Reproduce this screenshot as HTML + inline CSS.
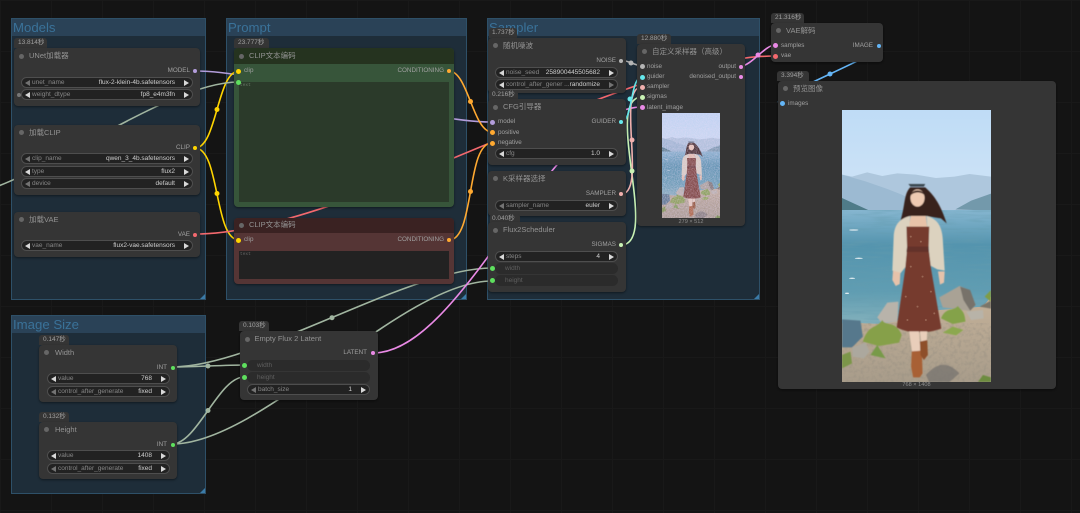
<!DOCTYPE html>
<html lang="zh"><head><meta charset="utf-8"><title>ComfyUI</title>
<style>
html,body{margin:0;padding:0;width:1080px;height:513px;overflow:hidden;background:#141414}
body{position:relative;font-family:"Liberation Sans","Noto Sans CJK SC",sans-serif;
background-image:linear-gradient(#191919 1px,transparent 1px),linear-gradient(90deg,#191919 1px,transparent 1px);background-size:51px 51px}
div,span,i,b,svg{position:absolute;box-sizing:border-box}
.g{background:#1e2d39;border:1px solid #2e5068}
.gh{left:0;top:0;right:0;height:17px;background:#2a4257}
.gt{left:1px;top:0;font-size:13.2px;line-height:17px;color:#3a7299;white-space:nowrap}
.gc{right:0;bottom:0;width:0;height:0;border-left:5px solid transparent;border-bottom:5px solid #3b7ba8}
.n{background:#353535;border-radius:4px;box-shadow:0 1px 2px rgba(0,0,0,.45)}
.b{background:#353535;border-radius:3px 3px 0 0;height:10px;color:#a0a0a0;font-size:6.5px;line-height:10px;padding-left:4px;white-space:nowrap}
.t{font-size:7.5px;line-height:10px;color:#939393;white-space:nowrap}
.d{width:5px;height:5px;border-radius:50%;background:#666}
.l{font-size:6.3px;line-height:10px;color:#a0a0a0;white-space:nowrap}
.r{text-align:right;transform:translateX(-100%)}
.p{width:4px;height:4px;margin:-2px 0 0 -2px;border-radius:50%}
.P{width:5px;height:5px;margin:-2.5px 0 0 -2.5px;border-radius:50%}
.w{height:11px;background:#222;border:1px solid #4e4e4e;border-radius:6px;color:#868686;font-size:6.5px;line-height:9px}
.w span{left:10px;top:0;white-space:nowrap}
.w b{right:17px;top:0;font-weight:normal;color:#cfcfcf;white-space:nowrap}
.w i{top:1.500px;width:0;height:0;border-top:3px solid transparent;border-bottom:3px solid transparent}
.al{left:3px;border-right:5px solid #d8d8d8}
.ar{right:3px;border-left:5px solid #d8d8d8}
.dim{opacity:.45}
.x{height:11px;background:#2b2b2b;border-radius:6px;color:#5f5f5f;font-size:6.5px;line-height:11px;padding-left:10px}
.c{font-size:5.6px;line-height:7px;color:#8f8f8f;text-align:center}
</style></head><body>

<svg width="0" height="0" style="left:0;top:0">
<defs>
<linearGradient id="sky" x1="0" y1="0" x2="0" y2="1"><stop offset="0" stop-color="#bfdcf6"/><stop offset=".6" stop-color="#dbe9f5"/><stop offset="1" stop-color="#ecf2f6"/></linearGradient>
<linearGradient id="sea" x1="0" y1="0" x2="0" y2="1"><stop offset="0" stop-color="#86b6d0"/><stop offset=".3" stop-color="#5494ae"/><stop offset=".7" stop-color="#609db2"/><stop offset="1" stop-color="#86b2bc"/></linearGradient>
<linearGradient id="gnd" x1="0" y1="0" x2="0" y2="1"><stop offset="0" stop-color="#c4b199"/><stop offset="1" stop-color="#a89c8a"/></linearGradient>
<filter id="wave" x="0" y="0" width="100%" height="100%"><feTurbulence type="fractalNoise" baseFrequency="0.012 0.13" numOctaves="2" seed="4"/><feColorMatrix values="0 0 0 0 .13  0 0 0 0 .33  0 0 0 0 .42  1.7 0 0 0 -.72"/></filter>
<filter id="gravel" x="0" y="0" width="100%" height="100%"><feTurbulence type="fractalNoise" baseFrequency="0.09" numOctaves="2" seed="9"/><feColorMatrix values="0 0 0 0 .3  0 0 0 0 .27  0 0 0 0 .22  2 0 0 0 -.85"/></filter>
<filter id="speck" x="0" y="0" width="100%" height="100%"><feTurbulence type="fractalNoise" baseFrequency="0.9" numOctaves="1" seed="3"/><feColorMatrix values="0 0 0 0 .85  0 0 0 0 .72  0 0 0 0 .95  1.6 0 0 0 -.55"/></filter>
<filter id="soft"><feGaussianBlur stdDeviation="1.800"/></filter>
<symbol id="scene" viewBox="0 0 444 816" preserveAspectRatio="none">
<rect width="444" height="816" fill="url(#sky)"/>
<path d="M0 194L30 200 75 187 120 198 165 190 220 194 280 204 335 200 380 192 444 200V310H0Z" fill="#aec7dd"/>
<path d="M0 194L70 214 130 235 178 254 240 285 300 300H0Z" fill="#9cbad2"/>
<path d="M338 298L385 272 444 251V302Z" fill="#7399ab"/>
<path d="M0 264L30 278 78 300H0Z" fill="#4f7b88"/>
<rect y="300" width="444" height="350" fill="url(#sea)"/>
<rect y="300" width="444" height="350" filter="url(#wave)" opacity=".65"/>
<g fill="#fff" opacity=".8"><ellipse cx="35" cy="360" rx="14" ry="2"/><ellipse cx="50" cy="445" rx="12" ry="2"/><ellipse cx="30" cy="505" rx="9" ry="2"/><ellipse cx="15" cy="550" rx="6" ry="2"/></g>
<path d="M0 640C50 635 90 645 130 640L290 600 420 590 444 560V816H0Z" fill="url(#gnd)"/>
<rect y="640" width="444" height="176" filter="url(#gravel)" opacity=".55"/>
<g filter="url(#soft)">
<path d="M0 628L55 632 62 680 30 712H0Z" fill="#56788c"/>
<path d="M290 562L350 528 380 540 398 585 382 603 300 592Z" fill="#a9a295"/>
<path d="M352 530L382 540 398 585 382 602 362 570Z" fill="#77726a"/>
<path d="M105 622L135 578 168 575 165 635 120 640Z" fill="#b8b3aa"/>
<path d="M30 712L70 698 82 725 65 745 32 740Z" fill="#aca89e"/>
<path d="M410 590L444 572V596Z" fill="#7a7468"/>
<path d="M370 605L420 600 422 625 385 630Z" fill="#b8b3a8"/>
<path d="M62 695C80 640 100 660 120 630 130 650 160 630 178 675L170 698 110 708Z" fill="#86a04a"/>
<path d="M295 625C310 590 330 605 345 588 360 605 365 605 368 635L330 642Z" fill="#84a24a"/>
<path d="M85 735L105 705 130 745Z" fill="#789a4a"/>
<path d="M300 668L330 650 362 660 340 676Z" fill="#8ca850"/>
<path d="M405 816L420 795 444 802V816Z" fill="#6d8c40"/>
<path d="M425 560L444 540V575Z" fill="#7f9c44"/>
<path d="M0 735L25 725 30 760 0 775Z" fill="#7c9648"/>
<path d="M250 795C290 750 320 760 350 790L320 816H260Z" fill="#6e6c6a" opacity=".65"/>
</g>
<g filter="url(#soft)">
<path d="M203 232C182 255 190 290 170 345L205 318 250 318 295 325 312 340C298 300 285 265 248 232Z" fill="#37201c"/>
<path d="M198 222H248L244 230H204Z" fill="#3b4650"/>
<path d="M205 318H250L254 352H198Z" fill="#e8c2a8"/>
<ellipse cx="225" cy="264" rx="21" ry="26" fill="#eecab2"/>
<path d="M204 256C210 236 240 236 247 256 236 244 216 244 204 256Z" fill="#37201c"/>
<path d="M203 318C170 326 156 345 154 380L150 482 174 490 194 465 198 380ZM252 318C282 326 300 345 301 400L306 482 284 478 262 466 256 380Z" fill="#dcd2bf"/>
<path d="M192 350L260 350 258 416 266 480 296 656C250 672 200 672 163 652L188 480 194 416Z" fill="#763a2e"/>
<path d="M194 410H258V426H192Z" fill="#63302a"/>
<path d="M152 482L174 488 172 522 160 528 150 510ZM286 484L306 484 304 518 292 524Z" fill="#e6c2aa"/>
<path d="M200 664H230L234 735H210ZM232 664H254L252 700H236Z" fill="#e9ceba"/>
<path d="M208 724L238 722 240 790 232 802H212L206 770Z" fill="#a86034"/>
<path d="M232 695L254 690 256 735 244 750 234 735Z" fill="#8e4f2c"/>
</g>
<g fill="#b58a74" opacity=".55"><circle cx="205" cy="380" r="3"/><circle cx="235" cy="395" r="3"/><circle cx="205" cy="470" r="3"/><circle cx="240" cy="500" r="3"/><circle cx="190" cy="560" r="3"/><circle cx="225" cy="590" r="3"/><circle cx="265" cy="545" r="3"/><circle cx="250" cy="630" r="3"/><circle cx="195" cy="630" r="3"/><circle cx="275" cy="610" r="3"/></g>
</symbol>
</defs></svg>

<!-- groups -->
<div class="g" style="left:11px;top:18px;width:195px;height:282px"><div class="gh"></div><div class="gt">Models</div><i class="gc"></i></div>
<div class="g" style="left:226px;top:18px;width:241px;height:282px"><div class="gh"></div><div class="gt">Prompt</div><i class="gc"></i></div>
<div class="g" style="left:487px;top:18px;width:273px;height:282px"><div class="gh"></div><div class="gt">Sampler</div><i class="gc"></i></div>
<div class="g" style="left:11px;top:315px;width:195px;height:179px"><div class="gh"></div><div class="gt">Image Size</div><i class="gc"></i></div>

<!-- links -->
<svg width="1080" height="513" viewBox="0 0 1080 513" style="left:0;top:0" fill="none" stroke-width="1.6">
<path d="M195 71C270 71 417 122 492 122" stroke="#b39ddb"/>
<path d="M195 148C217 148 217 71 239 71" stroke="#ffd500"/>
<path d="M195 148C220 148 214 240 239 240" stroke="#ffd500"/>
<path d="M195 234C347 234 623 56 775 56" stroke="#f4696e"/>
<path d="M449 71C468 71 473 132 492 132" stroke="#ffa931"/>
<path d="M449 240C475 240 466 143 492 143" stroke="#ffa931"/>
<path d="M172 367C256 367 408 268 492 268" stroke="#a1b5a0"/>
<path d="M172 367C190 367 226 365 244 365" stroke="#a1b5a0"/>
<path d="M172 444C197 444 219 377 244 377" stroke="#a1b5a0"/>
<path d="M172 444C262 444 402 281 492 281" stroke="#a1b5a0"/>
<path d="M-60 200C20 200 159 82 239 82" stroke="#a1b5a0"/>
<path d="M373 353C464 353 551 107 642 107" stroke="#ea8ae6"/>
<path d="M621 245C661 245 602 97 642 97" stroke="#c9f2b4"/>
<path d="M621 194C648 194 615 87 642 87" stroke="#f0b0ae"/>
<path d="M621 122C633 122 630 77 642 77" stroke="#66e8ec"/>
<path d="M621 60C626 60 637 66 642 66" stroke="#b5b5b5"/>
<path d="M741 66C751 66 765 45 775 45" stroke="#ea8ae6"/>
<path d="M878 45C906 45 754 103 782 103" stroke="#64b5f6"/>
<g stroke="none">
<circle cx="217" cy="109.500" r="2.500" fill="#ffd500"/><circle cx="217" cy="193.500" r="2.500" fill="#ffd500"/>
<circle cx="470.500" cy="101.500" r="2.500" fill="#ffa931"/><circle cx="470.500" cy="191.500" r="2.500" fill="#ffa931"/>
<circle cx="332" cy="317.700" r="2.500" fill="#a1b5a0"/><circle cx="208" cy="366" r="2.500" fill="#a1b5a0"/><circle cx="208" cy="410.500" r="2.500" fill="#a1b5a0"/>
<circle cx="632" cy="171" r="2.500" fill="#c9f2b4"/><circle cx="632" cy="140" r="2.500" fill="#f0b0ae"/><circle cx="630" cy="99" r="2.500" fill="#66e8ec"/><circle cx="631" cy="63" r="2.500" fill="#b5b5b5"/>
<circle cx="758" cy="55" r="2.500" fill="#ea8ae6"/><circle cx="830" cy="74" r="2.500" fill="#64b5f6"/>
</g></svg>

<!-- Models nodes -->
<div class="b" style="left:14px;top:38px;width:33px">13.814秒</div>
<div class="n" style="left:14px;top:48px;width:186px;height:58px"></div>
<i class="d" style="left:19px;top:54px"></i><div class="t" style="left:29px;top:51px">UNet加载器</div>
<div class="l r" style="left:190px;top:66px">MODEL</div><i class="p" style="left:195px;top:71px;background:#b39ddb"></i>
<div class="w" style="left:21px;top:77px;width:172px"><i class="al dim"></i><span>unet_name</span><b>flux-2-klein-4b.safetensors</b><i class="ar"></i></div>
<div class="w" style="left:21px;top:89px;width:172px"><i class="al"></i><span>weight_dtype</span><b>fp8_e4m3fn</b><i class="ar"></i></div>
<i class="p" style="left:19px;top:94.500px;background:#777"></i>

<div class="n" style="left:14px;top:125px;width:186px;height:70px"></div>
<i class="d" style="left:19px;top:130px"></i><div class="t" style="left:29px;top:128px">加载CLIP</div>
<div class="l r" style="left:190px;top:143px">CLIP</div><i class="p" style="left:195px;top:148px;background:#ffd500"></i>
<div class="w" style="left:21px;top:153px;width:172px"><i class="al dim"></i><span>clip_name</span><b>qwen_3_4b.safetensors</b><i class="ar"></i></div>
<div class="w" style="left:21px;top:166px;width:172px"><i class="al"></i><span>type</span><b>flux2</b><i class="ar"></i></div>
<div class="w" style="left:21px;top:178px;width:172px"><i class="al dim"></i><span>device</span><b>default</b><i class="ar"></i></div>

<div class="n" style="left:14px;top:212px;width:186px;height:45px"></div>
<i class="d" style="left:19px;top:217px"></i><div class="t" style="left:29px;top:215px">加载VAE</div>
<div class="l r" style="left:190px;top:230px">VAE</div><i class="p" style="left:195px;top:234.500px;background:#f4696e"></i>
<div class="w" style="left:21px;top:240px;width:172px"><i class="al"></i><span>vae_name</span><b>flux2-vae.safetensors</b><i class="ar"></i></div>

<!-- Prompt nodes -->
<div class="b" style="left:234px;top:38px;width:35px">23.777秒</div>
<div class="n" style="left:234px;top:48px;width:220px;height:159px;background:#37553a"></div>
<div style="left:234px;top:48px;width:220px;height:16px;background:#25331f;border-radius:4px 4px 0 0"></div>
<i class="d" style="left:239px;top:54px"></i><div class="t" style="left:249px;top:51px">CLIP文本编码</div>
<div style="left:239px;top:82px;width:210px;height:120px;background:#2b3a2a"></div>
<div style="left:240px;top:83px;font-size:4.500px;color:#6a7a68;font-family:'Liberation Mono',monospace">text</div>
<div class="l" style="left:244px;top:66px">clip</div><i class="P" style="left:238.700px;top:71px;background:#ffd500"></i>
<div class="l r" style="left:444px;top:66px">CONDITIONING</div><i class="p" style="left:449px;top:71px;background:#ffa931"></i>
<i class="P" style="left:238.700px;top:82px;background:#5ee05e"></i>

<div class="n" style="left:234px;top:218px;width:220px;height:66px;background:#553535"></div>
<div style="left:234px;top:218px;width:220px;height:15px;background:#3a2222;border-radius:4px 4px 0 0"></div>
<i class="d" style="left:239px;top:223px"></i><div class="t" style="left:249px;top:220px">CLIP文本编码</div>
<div style="left:239px;top:251px;width:210px;height:28px;background:#222"></div>
<div style="left:240px;top:252px;font-size:4.500px;color:#666;font-family:'Liberation Mono',monospace">text</div>
<div class="l" style="left:244px;top:235px">clip</div><i class="P" style="left:238.700px;top:240px;background:#ffd500"></i>
<div class="l r" style="left:444px;top:235px">CONDITIONING</div><i class="p" style="left:449px;top:240px;background:#ffa931"></i>

<!-- Sampler nodes -->
<div class="b" style="left:489px;top:28px;width:28px;padding-left:3px">1.737秒</div>
<div class="n" style="left:488px;top:38px;width:138px;height:55px"></div>
<i class="d" style="left:493px;top:43px"></i><div class="t" style="left:503px;top:41px">随机噪波</div>
<div class="l r" style="left:616px;top:56px">NOISE</div><i class="p" style="left:621px;top:60.500px;background:#b5b5b5"></i>
<div class="w" style="left:495px;top:67px;width:123px"><i class="al"></i><span>noise_seed</span><b>258900445505682</b><i class="ar"></i></div>
<div class="w" style="left:495px;top:79px;width:123px"><i class="al"></i><span>control_after_gener ...</span><b>randomize</b><i class="ar dim"></i></div>

<div class="b" style="left:489px;top:90px;width:29px;padding-left:3px">0.216秒</div>
<div class="n" style="left:488px;top:99px;width:138px;height:66px"></div>
<i class="d" style="left:493px;top:105px"></i><div class="t" style="left:503px;top:102px">CFG引导器</div>
<i class="P" style="left:492.500px;top:122px;background:#b39ddb"></i><div class="l" style="left:498px;top:117px">model</div>
<i class="P" style="left:492.500px;top:132.500px;background:#ffa931"></i><div class="l" style="left:498px;top:127.500px">positive</div>
<i class="P" style="left:492.500px;top:143px;background:#ffa931"></i><div class="l" style="left:498px;top:138px">negative</div>
<div class="l r" style="left:616px;top:117px">GUIDER</div><i class="p" style="left:621px;top:122px;background:#66e8ec"></i>
<div class="w" style="left:495px;top:148px;width:123px"><i class="al"></i><span>cfg</span><b>1.0</b><i class="ar"></i></div>

<div class="n" style="left:488px;top:171px;width:138px;height:45px"></div>
<i class="d" style="left:493px;top:176px"></i><div class="t" style="left:503px;top:174px">K采样器选择</div>
<div class="l r" style="left:616px;top:189px">SAMPLER</div><i class="p" style="left:621px;top:194px;background:#f0b0ae"></i>
<div class="w" style="left:495px;top:200px;width:123px"><i class="al dim"></i><span>sampler_name</span><b>euler</b><i class="ar"></i></div>

<div class="b" style="left:490px;top:214px;width:30px;padding-left:2px">0.040秒</div>
<div class="n" style="left:488px;top:222px;width:138px;height:70px"></div>
<i class="d" style="left:493px;top:228px"></i><div class="t" style="left:503px;top:225px">Flux2Scheduler</div>
<div class="l r" style="left:616px;top:240px">SIGMAS</div><i class="p" style="left:621px;top:245px;background:#c9f2b4"></i>
<div class="w" style="left:495px;top:251px;width:123px"><i class="al"></i><span>steps</span><b>4</b><i class="ar"></i></div>
<div class="x" style="left:495px;top:263px;width:123px">width</div>
<div class="x" style="left:495px;top:275px;width:123px">height</div>
<i class="P" style="left:492.500px;top:268.500px;background:#5ee05e"></i><i class="P" style="left:492.500px;top:280.500px;background:#5ee05e"></i>

<div class="b" style="left:637px;top:34px;width:34px">12.880秒</div>
<div class="n" style="left:637px;top:44px;width:108px;height:182px"></div>
<i class="d" style="left:642px;top:49px"></i><div class="t" style="left:652px;top:47px">自定义采样器（高级）</div>
<i class="P" style="left:642px;top:66.500px;background:#b5b5b5"></i><div class="l" style="left:647px;top:61.500px">noise</div>
<i class="P" style="left:642px;top:77px;background:#66e8ec"></i><div class="l" style="left:647px;top:72px">guider</div>
<i class="P" style="left:642px;top:87px;background:#f0b0ae"></i><div class="l" style="left:647px;top:82px">sampler</div>
<i class="P" style="left:642px;top:97px;background:#c9f2b4"></i><div class="l" style="left:647px;top:92px">sigmas</div>
<i class="P" style="left:642px;top:107.500px;background:#ea8ae6"></i><div class="l" style="left:647px;top:102.500px">latent_image</div>
<div class="l r" style="left:736px;top:61.500px">output</div><i class="p" style="left:741px;top:66.500px;background:#ea8ae6"></i>
<div class="l r" style="left:736px;top:72px">denoised_output</div><i class="p" style="left:741px;top:77px;background:#ea8ae6"></i>
<svg style="left:662px;top:113px" width="58" height="105" viewBox="0 0 58 105"><use href="#scene" width="58" height="105"/><rect width="58" height="105" fill="#c79fe0" opacity=".16"/><rect width="58" height="105" filter="url(#speck)" opacity=".55"/></svg>
<div class="c" style="left:662px;top:219px;width:58px">279 × 512</div>

<!-- Image size -->
<div class="b" style="left:39px;top:335px;width:30px;padding-left:4px">0.147秒</div>
<div class="n" style="left:39px;top:345px;width:138px;height:57px"></div>
<i class="d" style="left:44px;top:350px"></i><div class="t" style="left:55px;top:348px">Width</div>
<div class="l r" style="left:167px;top:363px">INT</div><i class="p" style="left:172.500px;top:367.500px;background:#5ee05e"></i>
<div class="w" style="left:47px;top:373px;width:123px"><i class="al"></i><span>value</span><b>768</b><i class="ar"></i></div>
<div class="w" style="left:47px;top:386px;width:123px"><i class="al dim"></i><span>control_after_generate</span><b>fixed</b><i class="ar"></i></div>

<div class="b" style="left:39px;top:412px;width:30px;padding-left:4px">0.132秒</div>
<div class="n" style="left:39px;top:422px;width:138px;height:57px"></div>
<i class="d" style="left:44px;top:427px"></i><div class="t" style="left:55px;top:425px">Height</div>
<div class="l r" style="left:167px;top:440px">INT</div><i class="p" style="left:172.500px;top:444.500px;background:#5ee05e"></i>
<div class="w" style="left:47px;top:450px;width:123px"><i class="al"></i><span>value</span><b>1408</b><i class="ar"></i></div>
<div class="w" style="left:47px;top:463px;width:123px"><i class="al dim"></i><span>control_after_generate</span><b>fixed</b><i class="ar"></i></div>

<!-- Latent -->
<div class="b" style="left:239px;top:321px;width:30px;padding-left:4px">0.103秒</div>
<div class="n" style="left:239.500px;top:331px;width:138px;height:69px"></div>
<i class="d" style="left:245px;top:336.500px"></i><div class="t" style="left:254.500px;top:334px">Empty Flux 2 Latent</div>
<div class="l r" style="left:367px;top:348px">LATENT</div><i class="p" style="left:373px;top:353px;background:#ea8ae6"></i>
<div class="x" style="left:247px;top:360px;width:123px">width</div>
<div class="x" style="left:247px;top:372px;width:123px">height</div>
<i class="P" style="left:244.300px;top:365px;background:#5ee05e"></i><i class="P" style="left:244.300px;top:377px;background:#5ee05e"></i>
<div class="w" style="left:247px;top:384px;width:123px"><i class="al dim"></i><span>batch_size</span><b>1</b><i class="ar"></i></div>

<!-- VAE decode -->
<div class="b" style="left:771px;top:13px;width:33px">21.316秒</div>
<div class="n" style="left:771px;top:23px;width:112px;height:39px"></div>
<i class="d" style="left:776px;top:28px"></i><div class="t" style="left:786px;top:25.500px">VAE解码</div>
<i class="P" style="left:775.500px;top:45.500px;background:#ea8ae6"></i><div class="l" style="left:781px;top:40.500px">samples</div>
<i class="P" style="left:775.500px;top:56px;background:#f4696e"></i><div class="l" style="left:781px;top:51px">vae</div>
<div class="l r" style="left:873px;top:40.500px">IMAGE</div><i class="p" style="left:878.500px;top:45.500px;background:#64b5f6"></i>

<!-- Preview -->
<div class="b" style="left:777px;top:71px;width:32px">3.394秒</div>
<div class="n" style="left:777.500px;top:81px;width:278px;height:308px"></div>
<i class="d" style="left:782.500px;top:86px"></i><div class="t" style="left:793px;top:83.500px">预览图像</div>
<i class="P" style="left:782.500px;top:103.500px;background:#64b5f6"></i><div class="l" style="left:788px;top:98.500px">images</div>
<svg style="left:842px;top:110px" width="149" height="272" viewBox="0 0 149 272"><use href="#scene" width="149" height="272"/></svg>
<div class="c" style="left:842px;top:382px;width:149px">768 × 1408</div>

</body></html>
